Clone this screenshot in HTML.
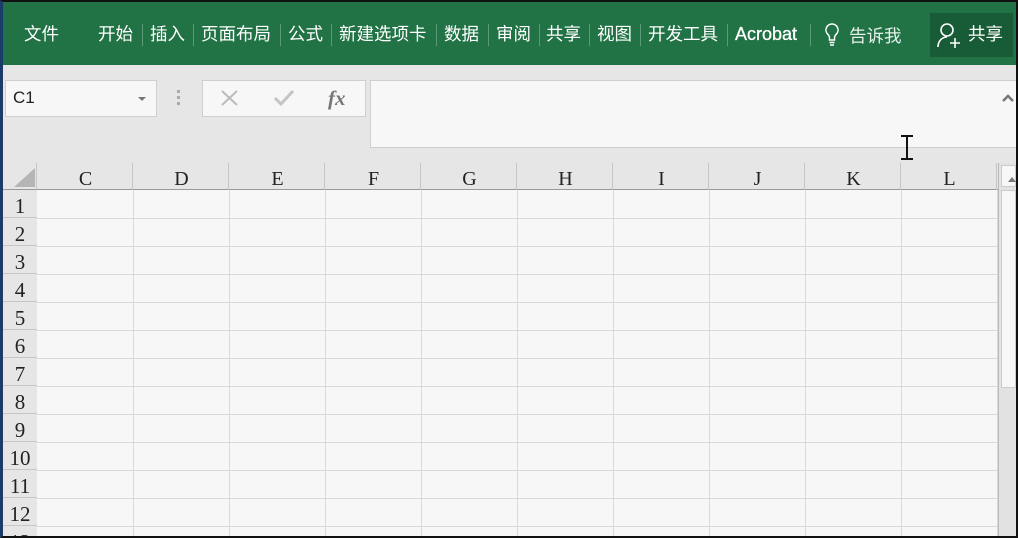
<!DOCTYPE html>
<html><head><meta charset="utf-8"><style>
*{margin:0;padding:0;box-sizing:border-box}
html,body{width:1018px;height:538px;overflow:hidden}
body{position:relative;background:#e6e6e6;font-family:"Liberation Sans","Noto Sans CJK SC",sans-serif}
.a{position:absolute}
.rb{position:absolute;top:0;left:0;width:1018px;height:65px;background:#217346}
.t{position:absolute;top:22px;color:#fff;font-size:17.5px;line-height:24px;white-space:nowrap}
.sep{position:absolute;top:24px;width:1px;height:22px;background:#5b9a77}
.ch{position:absolute;top:163px;height:27px;width:96px;text-align:center;font-family:"Liberation Serif",serif;font-size:20px;line-height:32px;color:#222;border-right:1px solid #c6c6c6;padding-left:2px}
.rh{position:absolute;left:3px;width:34px;height:28px;text-align:center;font-family:"Liberation Serif",serif;font-size:21px;line-height:32px;color:#222;border-bottom:1px solid #c6c6c6;background:#e6e6e6;overflow:hidden}
</style></head><body>
<div class="rb"></div>
<div class="t" style="left:24px">文件</div>
<div class="t" style="left:98px">开始</div><div class="sep" style="left:142px"></div>
<div class="t" style="left:150px">插入</div><div class="sep" style="left:193px"></div>
<div class="t" style="left:201px">页面布局</div><div class="sep" style="left:280px"></div>
<div class="t" style="left:288px">公式</div><div class="sep" style="left:331px"></div>
<div class="t" style="left:339px">新建选项卡</div><div class="sep" style="left:436px"></div>
<div class="t" style="left:444px">数据</div><div class="sep" style="left:488px"></div>
<div class="t" style="left:496px">审阅</div><div class="sep" style="left:539px"></div>
<div class="t" style="left:546px">共享</div><div class="sep" style="left:589px"></div>
<div class="t" style="left:597px">视图</div><div class="sep" style="left:640px"></div>
<div class="t" style="left:648px">开发工具</div><div class="sep" style="left:727px"></div>
<div class="t" style="left:735px;font-size:18px;-webkit-text-stroke:0.3px #fff">Acrobat</div><div class="sep" style="left:810px"></div>
<svg class="a" style="left:824px;top:22px" width="16" height="26" viewBox="0 0 16 26"><path d="M8 2a6 6 0 0 0-4 10.5c1 1 1.5 2 1.5 3.5v2h5v-2c0-1.5.5-2.5 1.5-3.5A6 6 0 0 0 8 2z" fill="none" stroke="#fff" stroke-width="1.5"/><path d="M5.5 20.5h5M6 23h4" stroke="#fff" stroke-width="1.5"/></svg>
<div class="t" style="left:849px;top:24px;color:#e8f0ea">告诉我</div>
<div class="a" style="left:930px;top:13px;width:83px;height:44px;background:#185c37"></div>
<svg class="a" style="left:936px;top:22px" width="26" height="26" viewBox="0 0 26 26"><circle cx="11" cy="8" r="6" fill="none" stroke="#fff" stroke-width="1.6"/><path d="M2 25c0-6 4-10 9-10" fill="none" stroke="#fff" stroke-width="1.6"/><path d="M14 21h10M19 16v10" stroke="#fff" stroke-width="1.6"/></svg>
<div class="t" style="left:968px">共享</div>

<div class="a" style="left:5px;top:80px;width:152px;height:37px;background:#f7f7f7;border:1px solid #cfcfcf"></div>
<div class="a" style="left:13px;top:88px;font-size:17px;color:#222">C1</div>
<div class="a" style="left:138px;top:97px;border:4px solid transparent;border-top:4px solid #777"></div>
<div class="a" style="left:177px;top:90px;width:3px;height:3px;background:#aaa;box-shadow:0 6px #aaa,0 12px #aaa"></div>
<div class="a" style="left:202px;top:80px;width:164px;height:37px;background:#f7f7f7;border:1px solid #cfcfcf"></div>
<svg class="a" style="left:220px;top:89px" width="20" height="18"><path d="M2 2l15 14M17 2L2 16" stroke="#bbb" stroke-width="2"/></svg>
<svg class="a" style="left:273px;top:89px" width="22" height="18"><path d="M2 9l6 6L20 2" stroke="#c4c4c4" stroke-width="3" fill="none"/></svg>
<div class="a" style="left:328px;top:86px;font-family:'Liberation Serif',serif;font-style:italic;font-weight:bold;font-size:21px;color:#777">fx</div>
<div class="a" style="left:370px;top:80px;width:648px;height:68px;background:#f7f7f7;border:1px solid #cfcfcf;border-right:none"></div>
<svg class="a" style="left:1002px;top:94px" width="12" height="8"><path d="M1 7l5-5 5 5" stroke="#777" stroke-width="2.5" fill="none"/></svg>
<svg class="a" style="left:899px;top:135px" width="16" height="26"><path d="M2 1h12M8 1v23M2 24h12" stroke="#111" stroke-width="2"/></svg>

<div class="a" style="left:3px;top:163px;width:34px;height:27px;background:#e6e6e6;border-right:1px solid #c6c6c6;border-bottom:1px solid #999"></div>
<div class="a" style="left:14px;top:168px;width:0;height:0;border-left:21px solid transparent;border-bottom:19px solid #b5b5b5"></div>
<div class="a" style="left:37px;top:190px;width:961px;height:348px;background:#f7f7f7"></div>
<div class="a" style="left:37px;top:189px;width:961px;height:1px;background:#999"></div>
<div class="ch" style="left:37px">C</div><div class="ch" style="left:133px">D</div><div class="ch" style="left:229px">E</div><div class="ch" style="left:325px">F</div><div class="ch" style="left:421px">G</div><div class="ch" style="left:517px">H</div><div class="ch" style="left:613px">I</div><div class="ch" style="left:709px">J</div><div class="ch" style="left:805px">K</div><div class="ch" style="left:901px">L</div>
<svg class="a" style="left:37px;top:190px" width="961" height="348">
<g stroke="#d9d9d9" stroke-width="1">
<path d="M96.5 0V348M192.5 0V348M288.5 0V348M384.5 0V348M480.5 0V348M576.5 0V348M672.5 0V348M768.5 0V348M864.5 0V348M960.5 0V348"/>
<path d="M0 28.5H961M0 56.5H961M0 84.5H961M0 112.5H961M0 140.5H961M0 168.5H961M0 196.5H961M0 224.5H961M0 252.5H961M0 280.5H961M0 308.5H961M0 336.5H961"/>
</g></svg>
<div class="a" style="left:36px;top:190px;width:1px;height:348px;background:#999"></div>
<div class="rh" style="top:190px">1</div><div class="rh" style="top:218px">2</div><div class="rh" style="top:246px">3</div><div class="rh" style="top:274px">4</div><div class="rh" style="top:302px">5</div><div class="rh" style="top:330px">6</div><div class="rh" style="top:358px">7</div><div class="rh" style="top:386px">8</div><div class="rh" style="top:414px">9</div><div class="rh" style="top:442px">10</div><div class="rh" style="top:470px">11</div><div class="rh" style="top:498px">12</div><div class="rh" style="top:526px;height:10px;border-bottom:none">13</div>
<div class="a" style="left:998px;top:163px;width:20px;height:375px;background:#e2e2e2;border-left:1px solid #bbb"></div>
<div class="a" style="left:1001px;top:165px;width:15px;height:22px;background:#f7f7f7;border:1px solid #ccc"></div>
<div class="a" style="left:1008px;top:173px;border:4px solid transparent;border-bottom:5px solid #777"></div>
<div class="a" style="left:1001px;top:190px;width:15px;height:198px;background:#f7f7f7;border:1px solid #ccc"></div>
<div class="a" style="left:0;top:0;width:1018px;height:538px;border:2px solid #111;border-left:3px solid #1b3c6a;pointer-events:none"></div>
</body></html>
